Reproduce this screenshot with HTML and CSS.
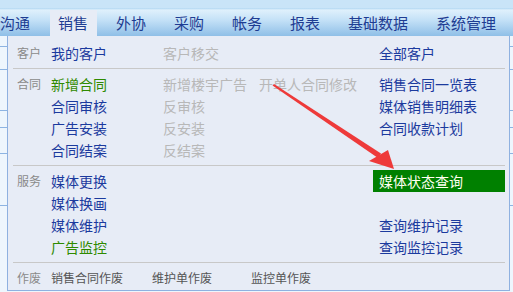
FILE: index.html
```html
<!DOCTYPE html>
<html lang="zh-cn">
<head>
  <meta charset="utf-8">
  <title>销售</title>
  <link rel="stylesheet" href="styles.css">
</head>
<body>
  <div class="nav">
    <span class="tab">沟通</span>
    <span class="tab on">销售</span>
    <span class="tab">外协</span>
    <span class="tab">采购</span>
    <span class="tab">帐务</span>
    <span class="tab">报表</span>
    <span class="tab">基础数据</span>
    <span class="tab">系统管理</span>
  </div>

  <div class="page">
    <div class="line l1"></div>
    <div class="line l2"></div>
    <div class="line l3"></div>
    <div class="line l4"></div>
    <div class="line l5"></div>
    <div class="line l6"></div>
  </div>

  <div class="menu">
    <div class="sec">
      <span class="cat">客户</span>
      <span class="it">我的客户</span>
      <span class="it off">客户移交</span>
      <span class="it r">全部客户</span>
    </div>
    <div class="sep"></div>
    <div class="sec">
      <span class="cat">合同</span>
      <span class="it new">新增合同</span>
      <span class="it off">新增楼宇广告<span class="more">开单人合同修改</span></span>
      <span class="it r">销售合同一览表</span>

      <span></span>
      <span class="it">合同审核</span>
      <span class="it off">反审核</span>
      <span class="it r">媒体销售明细表</span>

      <span></span>
      <span class="it">广告安装</span>
      <span class="it off">反安装</span>
      <span class="it r">合同收款计划</span>

      <span></span>
      <span class="it">合同结案</span>
      <span class="it off">反结案</span>
      <span></span>
    </div>
    <div class="sep"></div>
    <div class="sec">
      <span class="cat">服务</span>
      <span class="it">媒体更换</span>
      <span></span>
      <span class="it r hl">媒体状态查询</span>

      <span></span>
      <span class="it">媒体换画</span>
      <span></span>
      <span></span>

      <span></span>
      <span class="it">媒体维护</span>
      <span></span>
      <span class="it r">查询维护记录</span>

      <span></span>
      <span class="it new">广告监控</span>
      <span></span>
      <span class="it r">查询监控记录</span>
    </div>
    <div class="sep"></div>
    <div class="foot">
      <span class="cat">作废</span>
      <span>销售合同作废</span>
      <span>维护单作废</span>
      <span>监控单作废</span>
    </div>
  </div>

  <svg class="arrow" width="513" height="292" viewBox="0 0 513 292">
    <polygon points="272.5,85.5 274,84 381,153.5 378,158" fill="#ee3a3a"/>
    <polygon points="369,161 388,150 394,169" fill="#ee3a3a"/>
  </svg>
</body>
</html>
```

FILE: styles.css
```css
body {
  margin: 0;
  width: 513px;
  height: 292px;
  overflow: hidden;
  position: relative;
  background: #eef6fd;
  font-family: "Noto Sans CJK SC", "Noto Sans", sans-serif;
}

.nav {
  display: flex;
  align-items: flex-end;
  height: 36px;
  margin-left: -13px;
  background: linear-gradient(#c9e4f8 0, #c9e4f8 8px, #b0d6f2 8px, #dff0fc 10px, #c4e1f7 20px, #8fbfe7 36px);
}
.tab {
  flex: none;
  height: 26px;
  line-height: 26px;
  padding: 0 9px 0 8px;
  margin: 0 6px 0 5px;
  font-size: 15px;
  color: #1e3c92;
}
.tab.on {
  background: #e7ecf6;
}

.page {
  position: relative;
  height: 256px;
}
.line {
  position: absolute;
  left: 0;
  right: 0;
  height: 1px;
  background: #8db4e2;
}
.l1 { top: 10px; }
.l2 { top: 33px; }
.l3 { top: 74px; }
.l4 { top: 91px; }
.l5 { top: 117px; }
.l6 { top: 169px; }

.menu {
  position: absolute;
  left: 7px;
  top: 36px;
  width: 492px;
  height: 248px;
  padding: 6px 4px 0 5px;
  background: #e7ecf6;
  border: 1px solid #8fb1e0;
  border-top: none;
}

.sec, .foot {
  display: grid;
  grid-template-columns: 38px 112px 210px 132px;
  grid-auto-rows: 22px;
  line-height: 22px;
}
.foot {
  grid-template-columns: 38px 101px 99px auto;
  font-size: 12px;
  color: #555;
}
.cat {
  padding-left: 4px;
  font-size: 12px;
  color: #8a8a8a;
}
.it {
  font-size: 14px;
  color: #1b3a9e;
  white-space: nowrap;
}
.it.new {
  color: #2f8a00;
}
.it.off {
  color: #b8b8b8;
}
.more {
  margin-left: 12px;
}
.it.r {
  padding-left: 6px;
}
.it.hl {
  background: #008000;
  color: #fffff0;
}

.sep {
  height: 1px;
  margin: 4px 0;
  background: #c8c8c8;
}

.arrow {
  position: absolute;
  left: 0;
  top: 0;
}
```
